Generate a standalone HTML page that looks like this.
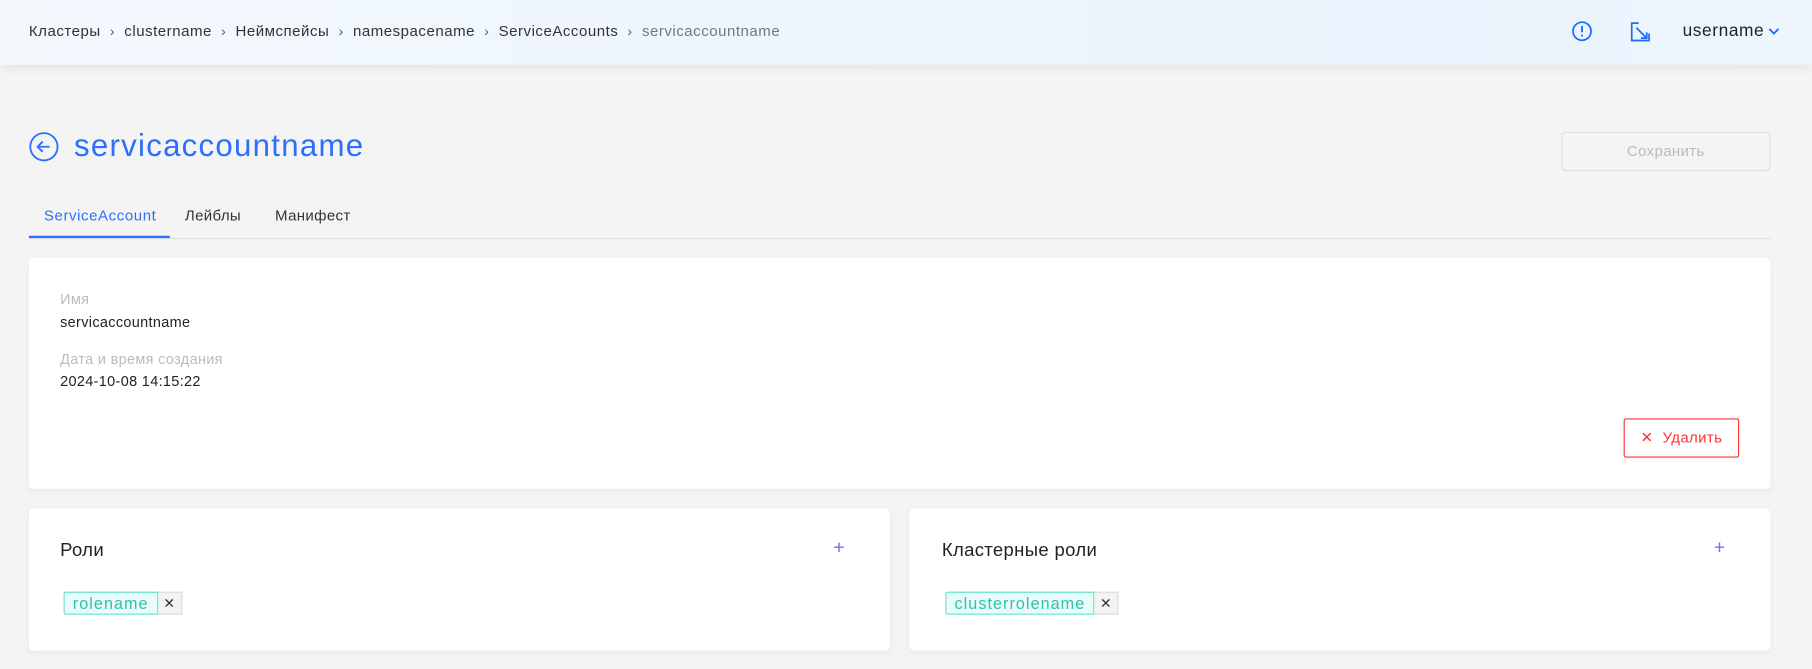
<!DOCTYPE html>
<html><head><meta charset="utf-8"><style>
*{box-sizing:border-box;margin:0;padding:0}
html,body{width:1812px;height:669px;overflow:hidden;background:#f4f4f4;font-family:"Liberation Sans","DejaVu Sans",sans-serif}
#w{width:1568px;height:579px;transform:scale(1.15561);transform-origin:0 0;position:relative;letter-spacing:0.3px}
.a{position:absolute;white-space:nowrap}
.hdr{position:absolute;left:0;top:0;width:1568px;height:56px;background:linear-gradient(90deg,#f3f8fd,#eef6fd 40%,#e9f3fd 80%,#eef6fe);box-shadow:0 2px 10px rgba(0,0,0,.08)}
.bc{top:19px;left:25px;font-size:13px;color:#333;letter-spacing:0.45px}
.bc span.s{color:#555;margin:0 8px;font-size:12px}
.card{position:absolute;background:#fff;border-radius:4px;box-shadow:0 2px 6px rgba(0,0,0,.05)}
.lbl{font-size:12.5px;color:#bbb}
.val{font-size:12.5px;color:#222}
.tag{position:absolute;height:20px;display:flex;font-size:14px}
.tag .t{background:#e9fcf8;border:1px solid #69e2cf;color:#2fc1b0;padding:0 7px;line-height:18px;border-radius:2px 0 0 2px;letter-spacing:0.9px}
.tag .x{background:#f2f2f2;border:1px solid #ddd;border-left:none;width:21px;text-align:center;line-height:18px;font-size:12px;color:#333}
</style></head><body><div id="w">
<div class="hdr"></div>
<div class="a bc">Кластеры<span class="s">›</span>clustername<span class="s">›</span>Неймспейсы<span class="s">›</span>namespacename<span class="s">›</span>ServiceAccounts<span class="s">›</span><span style="color:#777">servicaccountname</span></div>
<svg class="a" style="left:1360px;top:18px" width="18" height="18" viewBox="0 0 18 18"><circle cx="9" cy="9" r="7.8" fill="none" stroke="#1a6cff" stroke-width="1.5"/><path d="M9 4.5v5.5M9 12v1.5" stroke="#1a6cff" stroke-width="1.6"/></svg>
<svg class="a" style="left:1411px;top:19px" width="17" height="17" viewBox="0 0 17 17"><path d="M7 1H1v15h15v-6" fill="none" stroke="#1a6cff" stroke-width="1.5"/><path d="M5 5l9 9M9 14h5V9" fill="none" stroke="#1a6cff" stroke-width="1.5"/></svg>
<div class="a" style="left:1456px;top:18px;font-size:15px;color:#222;letter-spacing:0.5px">username</div>
<svg class="a" style="left:1530px;top:24px" width="10" height="7" viewBox="0 0 10 7"><path d="M1 1l4 4 4-4" fill="none" stroke="#1a6cff" stroke-width="1.6"/></svg>
<svg class="a" style="left:25px;top:114px" width="26" height="26" viewBox="0 0 26 26"><circle cx="13" cy="13" r="11.8" fill="none" stroke="#2b6fff" stroke-width="1.6"/><path d="M18 13H8M12 8.5L7.5 13 12 17.5" fill="none" stroke="#2b6fff" stroke-width="1.6"/></svg>
<div class="a" style="left:64px;top:111px;font-size:27px;color:#2b6fff;letter-spacing:1.1px">servicaccountname</div>
<div class="a" style="left:1351px;top:114px;width:181px;height:34px;border:1px solid #ddd;border-radius:4px;text-align:center;line-height:32px;font-size:13px;color:#bbb">Сохранить</div>
<div class="a" style="left:38px;top:179px;font-size:13px;color:#2b6fff;letter-spacing:0.5px">ServiceAccount</div>
<div class="a" style="left:160px;top:179px;font-size:13px;color:#333">Лейблы</div>
<div class="a" style="left:238px;top:179px;font-size:13px;color:#333">Манифест</div>
<div class="a" style="left:25px;top:206px;width:1507px;height:1px;background:#ddd"></div>
<div class="a" style="left:25px;top:204px;width:122px;height:2px;background:#2b6fff"></div>
<div class="card" style="left:25px;top:223px;width:1507px;height:200px"></div>
<div class="a lbl" style="left:52px;top:252px">Имя</div>
<div class="a val" style="left:52px;top:272px">servicaccountname</div>
<div class="a lbl" style="left:52px;top:304px">Дата и время создания</div>
<div class="a val" style="left:52px;top:323px">2024-10-08 14:15:22</div>
<div class="a" style="left:1405px;top:362px;width:100px;height:34px;border:1px solid #f33;border-radius:2px;text-align:center;line-height:32px;font-size:13px;color:#f33">✕&nbsp; Удалить</div>
<div class="card" style="left:25px;top:440px;width:745px;height:123px"></div>
<div class="card" style="left:787px;top:440px;width:745px;height:123px"></div>
<div class="a" style="left:52px;top:468px;font-size:16px;color:#222">Роли</div>
<div class="a" style="left:721px;top:464px;font-size:17px;color:#7b6cf0">+</div>
<div class="tag" style="left:55px;top:512px"><div class="t">rolename</div><div class="x">✕</div></div>
<div class="a" style="left:815px;top:468px;font-size:16px;color:#222">Кластерные роли</div>
<div class="a" style="left:1483px;top:464px;font-size:17px;color:#7b6cf0">+</div>
<div class="tag" style="left:818px;top:512px"><div class="t">clusterrolename</div><div class="x">✕</div></div>
</div></body></html>
